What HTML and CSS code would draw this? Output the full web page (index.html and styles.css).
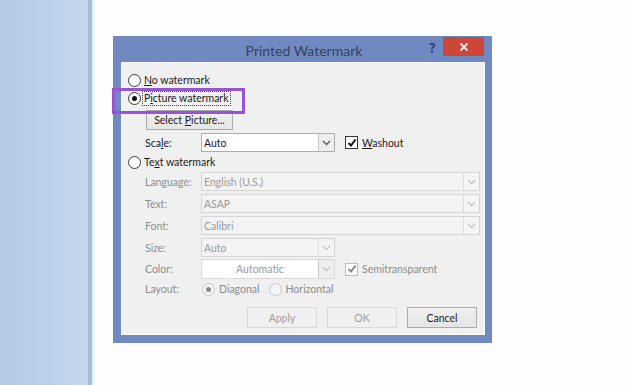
FILE: index.html
```html
<!DOCTYPE html>
<html>
<head>
<meta charset="utf-8">
<link rel="stylesheet" href="styles.css">
</head>
<body>
<div class="side"></div>
<div class="page">
  <div class="dialog">
    <div class="titlebar">
      <div class="title">Printed Watermark</div>
      <div class="help">?</div>
      <div class="close"><svg width="10" height="10" viewBox="0 0 10 10"><path d="M1.5 1.5L8.5 8.5M8.5 1.5L1.5 8.5" stroke="#fbe3e0" stroke-width="2"/></svg></div>
    </div>
    <div class="client">
      <div class="highlight"></div>
      <div class="row r1"><span class="radio"></span><span class="lbl"><u>N</u>o watermark</span></div>
      <div class="row r2"><span class="radio on"></span><span class="lbl focus">P<u>i</u>cture watermark</span></div>
      <div class="row r3"><button class="btn sel">Select <u>P</u>icture...</button></div>
      <div class="row r4 field">
        <span class="flabel en">Sca<u>l</u>e:</span>
        <div class="combo short white"><span class="val en">Auto</span><span class="arrow"><svg width="9" height="6" viewBox="0 0 9 6"><path d="M1 1L4.5 4.5L8 1" fill="none" stroke="#555" stroke-width="1.3"/></svg></span></div>
        <span class="check"><svg width="10" height="10" viewBox="0 0 10 10"><path d="M1.5 5L4 7.5L8.5 1.5" fill="none" stroke="#111" stroke-width="2"/></svg></span>
        <span class="clbl en"><u>W</u>ashout</span>
      </div>
      <div class="row r5"><span class="radio"></span><span class="lbl">Te<u>x</u>t watermark</span></div>
      <div class="row r6 field">
        <span class="flabel">Language:</span>
        <div class="combo long dis"><span class="val">English (U.S.)</span><span class="arrow"><svg width="9" height="6" viewBox="0 0 9 6"><path d="M1 1L4.5 4.5L8 1" fill="none" stroke="#c4c4c4" stroke-width="1.3"/></svg></span></div>
      </div>
      <div class="row r7 field">
        <span class="flabel">Text:</span>
        <div class="combo long dis"><span class="val">ASAP</span><span class="arrow"><svg width="9" height="6" viewBox="0 0 9 6"><path d="M1 1L4.5 4.5L8 1" fill="none" stroke="#c4c4c4" stroke-width="1.3"/></svg></span></div>
      </div>
      <div class="row r8 field">
        <span class="flabel">Font:</span>
        <div class="combo long dis"><span class="val">Calibri</span><span class="arrow"><svg width="9" height="6" viewBox="0 0 9 6"><path d="M1 1L4.5 4.5L8 1" fill="none" stroke="#c4c4c4" stroke-width="1.3"/></svg></span></div>
      </div>
      <div class="row r9 field">
        <span class="flabel">Size:</span>
        <div class="combo short dis"><span class="val">Auto</span><span class="arrow"><svg width="9" height="6" viewBox="0 0 9 6"><path d="M1 1L4.5 4.5L8 1" fill="none" stroke="#c4c4c4" stroke-width="1.3"/></svg></span></div>
      </div>
      <div class="row r10 field">
        <span class="flabel">Color:</span>
        <div class="combo short white dis2"><span class="val center">Automatic</span><span class="arrow"><svg width="9" height="6" viewBox="0 0 9 6"><path d="M1 1L4.5 4.5L8 1" fill="none" stroke="#c4c4c4" stroke-width="1.3"/></svg></span></div>
        <span class="check dis"><svg width="10" height="10" viewBox="0 0 10 10"><path d="M1.5 5L4 7.5L8.5 1.5" fill="none" stroke="#8a8a8a" stroke-width="2"/></svg></span>
        <span class="clbl">Semitransparent</span>
      </div>
      <div class="row r11 field">
        <span class="flabel">Layout:</span>
        <span class="radio dis on"></span><span class="rlbl">Diagonal</span>
        <span class="radio dis"></span><span class="rlbl">Horizontal</span>
      </div>
      <div class="row r12 buttons">
        <button class="btn dbtn">Apply</button>
        <button class="btn dbtn">OK</button>
        <button class="btn cancel">Cancel</button>
      </div>
    </div>
  </div>
</div>
</body>
</html>
```
FILE: styles.css
```css
html, body {
  margin: 0;
  padding: 0;
}
body {
  width: 625px;
  height: 385px;
  overflow: hidden;
  display: flex;
  background: #fefefe;
  font-family: Lato, "Noto Sans", sans-serif;
}
.side {
  width: 88px;
  height: 385px;
  flex: none;
  background: linear-gradient(to right, #b4cbe6 0%, #bdd1ea 60%, #c6d7ed 100%);
  border-right: 4px solid #a8bcd6;
  box-shadow: 2px 0 2px #e3ebf5;
}
.page {
  flex: 1;
  padding: 36px 0 0 21px;
}
.dialog {
  width: 379px;
  height: 307px;
  box-sizing: border-box;
  background: #7089c0;
  padding: 0 7px 8px 8px;
  display: flex;
  flex-direction: column;
}
.titlebar {
  height: 26px;
  flex: none;
  position: relative;
}
.title {
  position: absolute;
  left: 0;
  right: 0;
  top: 6px;
  text-align: center;
  font-size: 14px;
  color: #33435f;
  padding-left: 2px;
}
.help {
  position: absolute;
  left: 308px;
  top: 3px;
  font-size: 14px;
  font-weight: bold;
  color: #1f3562;
}
.close {
  position: absolute;
  left: 322px;
  top: 1px;
  width: 41px;
  height: 19px;
  background: #cd4639;
  display: flex;
  align-items: center;
  justify-content: center;
}
.client {
  flex: 1;
  background: #f0f0f0;
  border: 1px solid #fbfbfb;
  position: relative;
  font-size: 10.5px;
  color: #1b1b1b;
  padding: 0 6px;
}
.highlight {
  position: absolute;
  left: -10px;
  top: 25px;
  width: 133px;
  height: 26px;
  box-sizing: border-box;
  border: 3px solid #9455cf;
}
.row {
  display: flex;
  align-items: center;
}
.r1 { margin-top: 8px; height: 18px; }
.r2 { margin-top: 0; height: 18px; }
.r3 { margin-top: 3px; height: 20px; padding-left: 18px; }
.r4 { margin-top: 3px; height: 19px; }
.r5 { margin-top: 1px; height: 18px; }
.r6 { margin-top: 1px; height: 19px; }
.r7 { margin-top: 3px; height: 19px; }
.r8 { margin-top: 3px; height: 19px; }
.r9 { margin-top: 3px; height: 19px; }
.r10 { margin-top: 2px; height: 20px; }
.r11 { margin-top: 1px; height: 18px; }
.r12 { margin-top: 9px; height: 21px; }
.radio {
  width: 11px;
  height: 11px;
  border: 1px solid #3b3b3b;
  border-radius: 50%;
  background: #fff;
  flex: none;
  position: relative;
}
.radio.on::after {
  content: "";
  position: absolute;
  left: 3px;
  top: 3px;
  width: 5px;
  height: 5px;
  border-radius: 50%;
  background: #111;
}
.radio.dis {
  border-color: #c8c8c8;
  background: #f4f4f4;
}
.radio.dis.on::after {
  background: #888;
}
.lbl {
  margin-left: 1px;
  padding: 0 1px;
  border: 1px dotted transparent;
  line-height: 13px;
}
.lbl.focus {
  border-color: #444;
}
u {
  text-decoration: underline;
  text-underline-offset: 1px;
}
.btn {
  font-family: inherit;
  font-size: 10.5px;
  margin: 0;
  padding: 0;
  height: 100%;
  border: 1px solid #acacac;
  background: linear-gradient(#f0f0f0, #e5e5e5);
  color: #1b1b1b;
}
.sel {
  width: 87px;
}
.field {
  padding-left: 17px;
}
.flabel {
  width: 56px;
  flex: none;
  color: #8d8d8d;
}
.flabel.en, .clbl.en, .val.en {
  color: #1b1b1b;
}
.combo {
  height: 100%;
  box-sizing: border-box;
  border: 1px solid #d4d4d4;
  background: #f3f3f3;
  display: flex;
  align-items: center;
  flex: none;
}
.combo.short { width: 134px; }
.combo.long { width: 279px; }
.combo.white { background: #fff; border-color: #abadb3; }
.combo.dis2 { border-color: #d9d9d9; }
.val {
  flex: 1;
  padding-left: 2px;
  color: #9a9a9a;
}
.val.center {
  text-align: center;
  padding-left: 0;
}
.arrow {
  width: 15px;
  height: 100%;
  border-left: 1px solid #dcdcdc;
  display: flex;
  align-items: center;
  justify-content: center;
  background: #f4f4f4;
}
.combo.white .arrow {
  border-left-color: #c8c8c8;
  background: #eeeeee;
}
.check {
  margin-left: 10px;
  width: 11px;
  height: 11px;
  border: 1px solid #333;
  background: #fff;
  display: flex;
  align-items: center;
  justify-content: center;
  flex: none;
}
.check.dis {
  border-color: #bdbdbd;
}
.clbl {
  margin-left: 4px;
  color: #8d8d8d;
}
.r11 .radio {
  margin-left: 1px;
}
.rlbl {
  margin-left: 4px;
  margin-right: 8px;
  color: #8d8d8d;
}
.buttons {
  justify-content: flex-end;
  gap: 10px;
  padding-right: 1px;
}
.dbtn {
  width: 70px;
  color: #a0a0a0;
  border-color: #d8d8d8;
  background: #f0f0f0;
}
.cancel {
  width: 70px;
}
```
